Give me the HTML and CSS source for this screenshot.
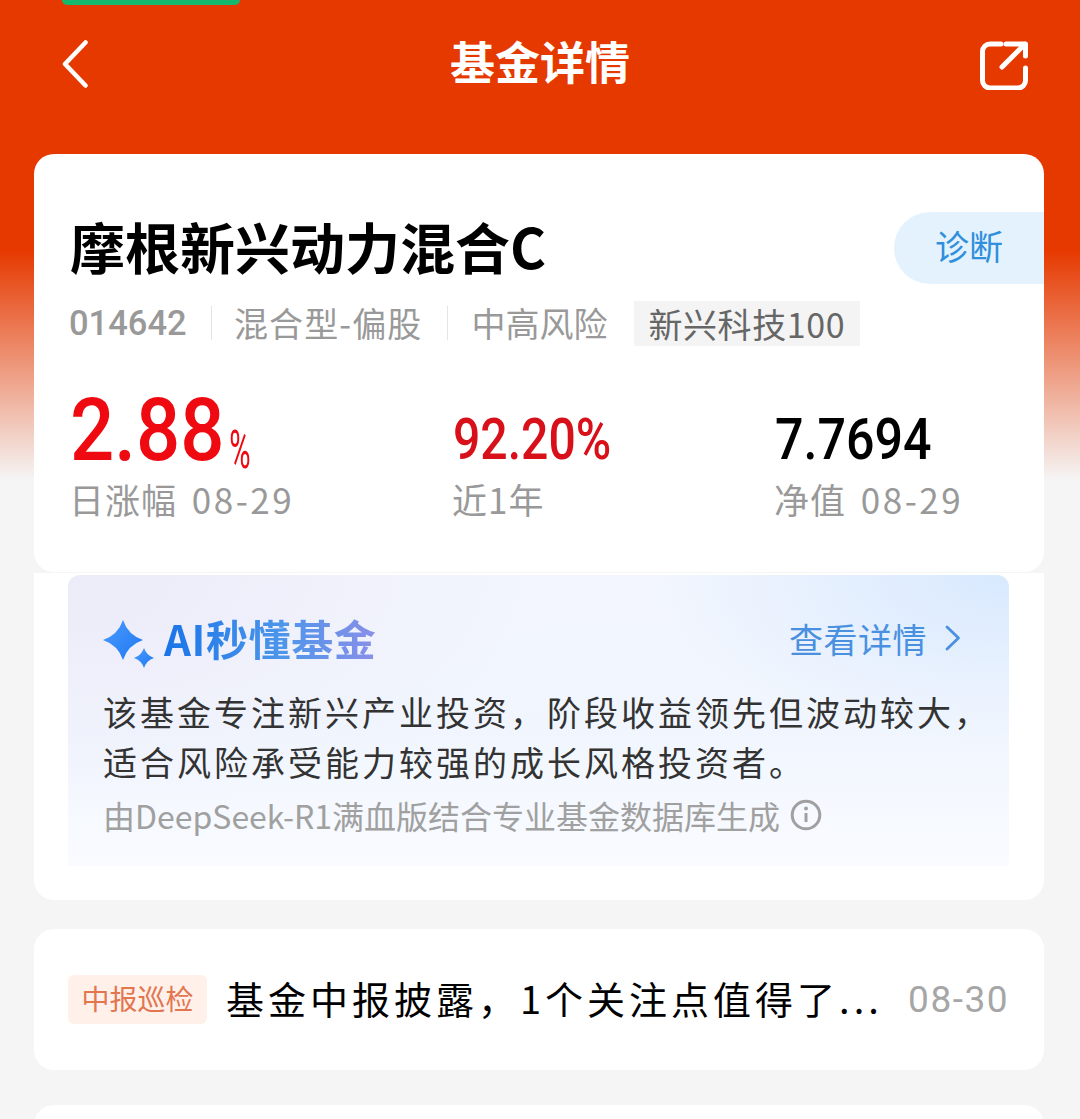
FILE: index.html
```html
<!DOCTYPE html>
<html lang="zh-CN">
<head>
<meta charset="utf-8">
<title>基金详情</title>
<link rel="stylesheet" href="styles.css">
</head>
<body>
<div class="page">
  <div class="status-pill"></div>
  <header class="nav">
    <svg class="nav-back" viewBox="0 0 26 48" aria-hidden="true"><path d="M23.500 2.500 3 24l20.500 21.500"/></svg>
    <h1 class="nav-title">基金详情</h1>
    <svg class="nav-share" viewBox="0 0 48 48" aria-hidden="true"><path d="M21 3H10a7.500 7.500 0 0 0-7.500 7.500v29A7.500 7.500 0 0 0 10 47h28a7.500 7.500 0 0 0 7.500-7.500V27"/><path d="M26 3h19.500v12M45 3 22 26"/></svg>
  </header>

  <section class="card summary">
    <div class="diagnose">诊断</div>
    <h2 class="fund-name">摩根新兴动力混合C</h2>
    <div class="meta">
      <span class="meta-code">014642</span>
      <span class="meta-item meta-type">混合型-偏股</span>
      <span class="meta-item meta-risk">中高风险</span>
      <span class="meta-tag">新兴科技100</span>
    </div>
    <div class="stats">
      <div class="stat">
        <div class="stat-value stat-main red">2.88<span class="pct">%</span></div>
        <div class="stat-label">日涨幅 <span class="stat-date">08-29</span></div>
      </div>
      <div class="stat">
        <div class="stat-value stat-return red-soft">92.20%</div>
        <div class="stat-label">近1年</div>
      </div>
      <div class="stat">
        <div class="stat-value stat-nav black">7.7694</div>
        <div class="stat-label">净值 <span class="stat-date">08-29</span></div>
      </div>
    </div>
  </section>

  <section class="card ai-card">
    <div class="ai-panel">
      <div class="ai-head">
        <div class="ai-brand">
          <svg class="ai-star" viewBox="0 0 52 50" aria-hidden="true">
            <defs><linearGradient id="star" x1="0" y1="0" x2="1" y2="1"><stop offset="0" stop-color="#4a9bff"/><stop offset="1" stop-color="#1f78f0"/></linearGradient></defs>
            <path fill="url(#star)" d="M20 0Q25 15 40 20 25 25 20 40 15 25 0 20 15 15 20 0Z"/>
            <path fill="url(#star)" d="M41 28Q43.500 35.500 51 38 43.500 40.500 41 48 38.500 40.500 31 38 38.500 35.500 41 28Z"/>
          </svg>
          <span class="ai-title">AI秒懂基金</span>
        </div>
        <div class="ai-more">
          <span>查看详情</span>
          <svg class="ai-chevron" viewBox="0 0 16 26" aria-hidden="true"><path d="M2 2l11.500 11L2 24"/></svg>
        </div>
      </div>
      <p class="ai-text">该基金专注新兴产业投资，阶段收益领先但波动较大，适合风险承受能力较强的成长风格投资者。</p>
      <div class="ai-note">
        <span>由DeepSeek-R1满血版结合专业基金数据库生成</span>
        <svg class="ai-info" viewBox="0 0 32 32" aria-hidden="true"><circle cx="16" cy="16" r="13.800"/><path d="M16 14v9"/><circle class="dot" cx="16" cy="9.500" r="2"/></svg>
      </div>
    </div>
  </section>

  <section class="card notice">
    <span class="notice-tag">中报巡检</span>
    <span class="notice-text">基金中报披露，1个关注点值得了...</span>
    <span class="notice-date">08-30</span>
  </section>

  <section class="card next"></section>
</div>
</body>
</html>
```

FILE: styles.css
```css
* { box-sizing: border-box; }
html, body { margin: 0; padding: 0; }
body {
  height: 1119px;
  overflow: hidden;
  background: #f5f5f5;
  font-family: "Noto Sans CJK SC", "Noto Sans", sans-serif;
}
.page {
  height: 1119px;
  overflow: hidden;
  padding: 0 36px 0 34px;
  background: linear-gradient(180deg, #e63900 0, #e63900 250px, #f5f5f5 480px);
}
.status-pill {
  width: 178px;
  height: 5px;
  margin-left: 28px;
  background: #14b96e;
  border-radius: 0 0 14px 14px;
}
.nav {
  height: 149px;
  margin-right: -20px;
  padding: 0 36px 0 28px;
  display: flex;
  align-items: flex-start;
  justify-content: space-between;
}
.nav-back { width: 26px; height: 48px; margin-top: 35px; fill: none; stroke: #fff; stroke-width: 4.500; stroke-linecap: round; stroke-linejoin: round; }
.nav-title { margin: 25px 0 0 12px; font-size: 45px; line-height: 62px; font-weight: 700; color: #fff; }
.nav-share { width: 48px; height: 50px; margin-top: 35px; fill: none; stroke: #fff; stroke-width: 5; stroke-linecap: round; stroke-linejoin: round; }

.card { background: #fff; border-radius: 20px; }
.summary {
  position: relative;
  height: 418px;
  padding: 53px 0 0 36px;
}
.diagnose {
  position: absolute;
  top: 58px;
  right: 0;
  width: 150px;
  height: 72px;
  padding-left: 41px;
  background: #e3f2fd;
  border-radius: 36px 0 0 36px;
  font-size: 34px;
  line-height: 68px;
  color: #2f8fdc;
}
.fund-name { margin: 0; font-size: 55px; line-height: 76px; font-weight: 700; color: #000; }
.meta {
  margin-top: 17px;
  display: flex;
  align-items: center;
  height: 46px;
  font-size: 34px;
  color: #999;
}
.meta-code { font-family: Roboto, sans-serif; font-weight: 500; font-size: 34.500px; width: 117px; margin-left: -1px; }
.meta-item { padding-left: 22px; margin-left: 25px; border-left: 1px solid #e4e4e4; line-height: 34px; }
.meta-type { letter-spacing: 1.100px; }
.meta-risk { padding-left: 23px; }
.meta-tag { margin-left: 27px; margin-top: 1px; padding: 0 15px 0 14px; background: #f4f4f4; color: #666; line-height: 45px; height: 45px; letter-spacing: .6px; }
.stats {
  margin-top: 43px;
  display: grid;
  grid-template-columns: 383px 322px 1fr;
}
.stat { display: flex; flex-direction: column; justify-content: flex-end; }
.stat-value {
  font-family: Roboto, sans-serif;
  font-weight: 500;
  white-space: nowrap;
  transform-origin: left center;
  margin-bottom: 7px;
}
.stat-main { font-size: 88px; line-height: 82px; margin-bottom: 5px; transform: scaleX(.885); }
.stat-return { font-size: 58px; line-height: 60px; transform: scaleX(.83); }
.stat-nav { font-size: 58px; line-height: 60px; transform: scaleX(.865); }
.pct { display: inline-block; font-size: 53px; font-weight: 400; line-height: 0; margin-left: 5px; vertical-align: -8px; transform: scaleX(.62); transform-origin: left center; }
.red { color: #ee0a10; }
.red-soft { color: #d8101a; }
.black { color: #000; }
.stat-label { margin-left: -1px; font-size: 35px; line-height: 46px; letter-spacing: 1px; color: #999; white-space: nowrap; }
.stat-date { margin-left: 6px; letter-spacing: 2.500px; }

.ai-card {
  margin-top: 1px;
  height: 327px;
  padding: 2px 35px 0 34px;
  border-radius: 0 0 20px 20px;
}
.ai-panel {
  height: 291px;
  padding: 38px 36px 0 36px;
  border-radius: 12px 12px 0 0;
  background:
    radial-gradient(360px 170px at 100% 0, #d8e9fe 0, rgba(216,233,254,0) 100%),
    radial-gradient(480px 240px at 0 0, #ecebf8 0, rgba(236,235,248,0) 100%),
    linear-gradient(180deg, #f3f6fe 0, #f1f6fe 55%, #f9fbff 100%);
}
.ai-head { display: flex; justify-content: space-between; align-items: center; height: 50px; padding-right: 12px; }
.ai-brand { display: flex; align-items: center; margin-left: -1px; }
.ai-star { width: 52px; height: 50px; margin-top: 14px; }
.ai-title {
  margin-left: 9px;
  font-size: 42px;
  line-height: 50px;
  font-weight: 700;
  letter-spacing: .6px;
  background: linear-gradient(90deg, #1a74e8 0, #4c96ea 55%, #8a8fe8 100%);
  -webkit-background-clip: text;
  background-clip: text;
  color: transparent;
}
.ai-more { display: flex; align-items: center; gap: 18px; font-size: 34px; letter-spacing: .5px; color: #4a90e0; }
.ai-chevron { width: 16px; height: 26px; fill: none; stroke: #4a90e0; stroke-width: 2.800; stroke-linecap: round; stroke-linejoin: round; }
.ai-text { margin: 24px -34px 0 -1px; font-size: 34px; line-height: 50px; letter-spacing: 3px; color: #333; }
.ai-note { margin-top: 6px; display: flex; align-items: center; gap: 10px; margin-left: -1px; font-size: 32px; line-height: 44px; color: #a0a0a0; white-space: nowrap; }
.ai-info { width: 32px; height: 32px; fill: none; stroke: #a0a0a0; stroke-width: 3; }
.ai-info .dot { fill: #a0a0a0; stroke: none; }

.notice {
  margin-top: 29px;
  height: 141px;
  padding: 0 35px 0 34px;
  display: flex;
  align-items: center;
  white-space: nowrap;
}
.notice-tag {
  width: 139px;
  height: 49px;
  text-align: center;
  background: #fff0ea;
  border-radius: 6px;
  color: #e2764f;
  font-size: 28px;
  line-height: 47px;
}
.notice-text { margin: 0 0 4px 19px; flex: 1; font-size: 38px; line-height: 48px; letter-spacing: 4px; color: #000; }
.notice-date { font-family: Roboto, sans-serif; font-size: 37px; color: #a6a6a6; letter-spacing: 1.500px; }
.next { margin-top: 35px; height: 60px; }
```
